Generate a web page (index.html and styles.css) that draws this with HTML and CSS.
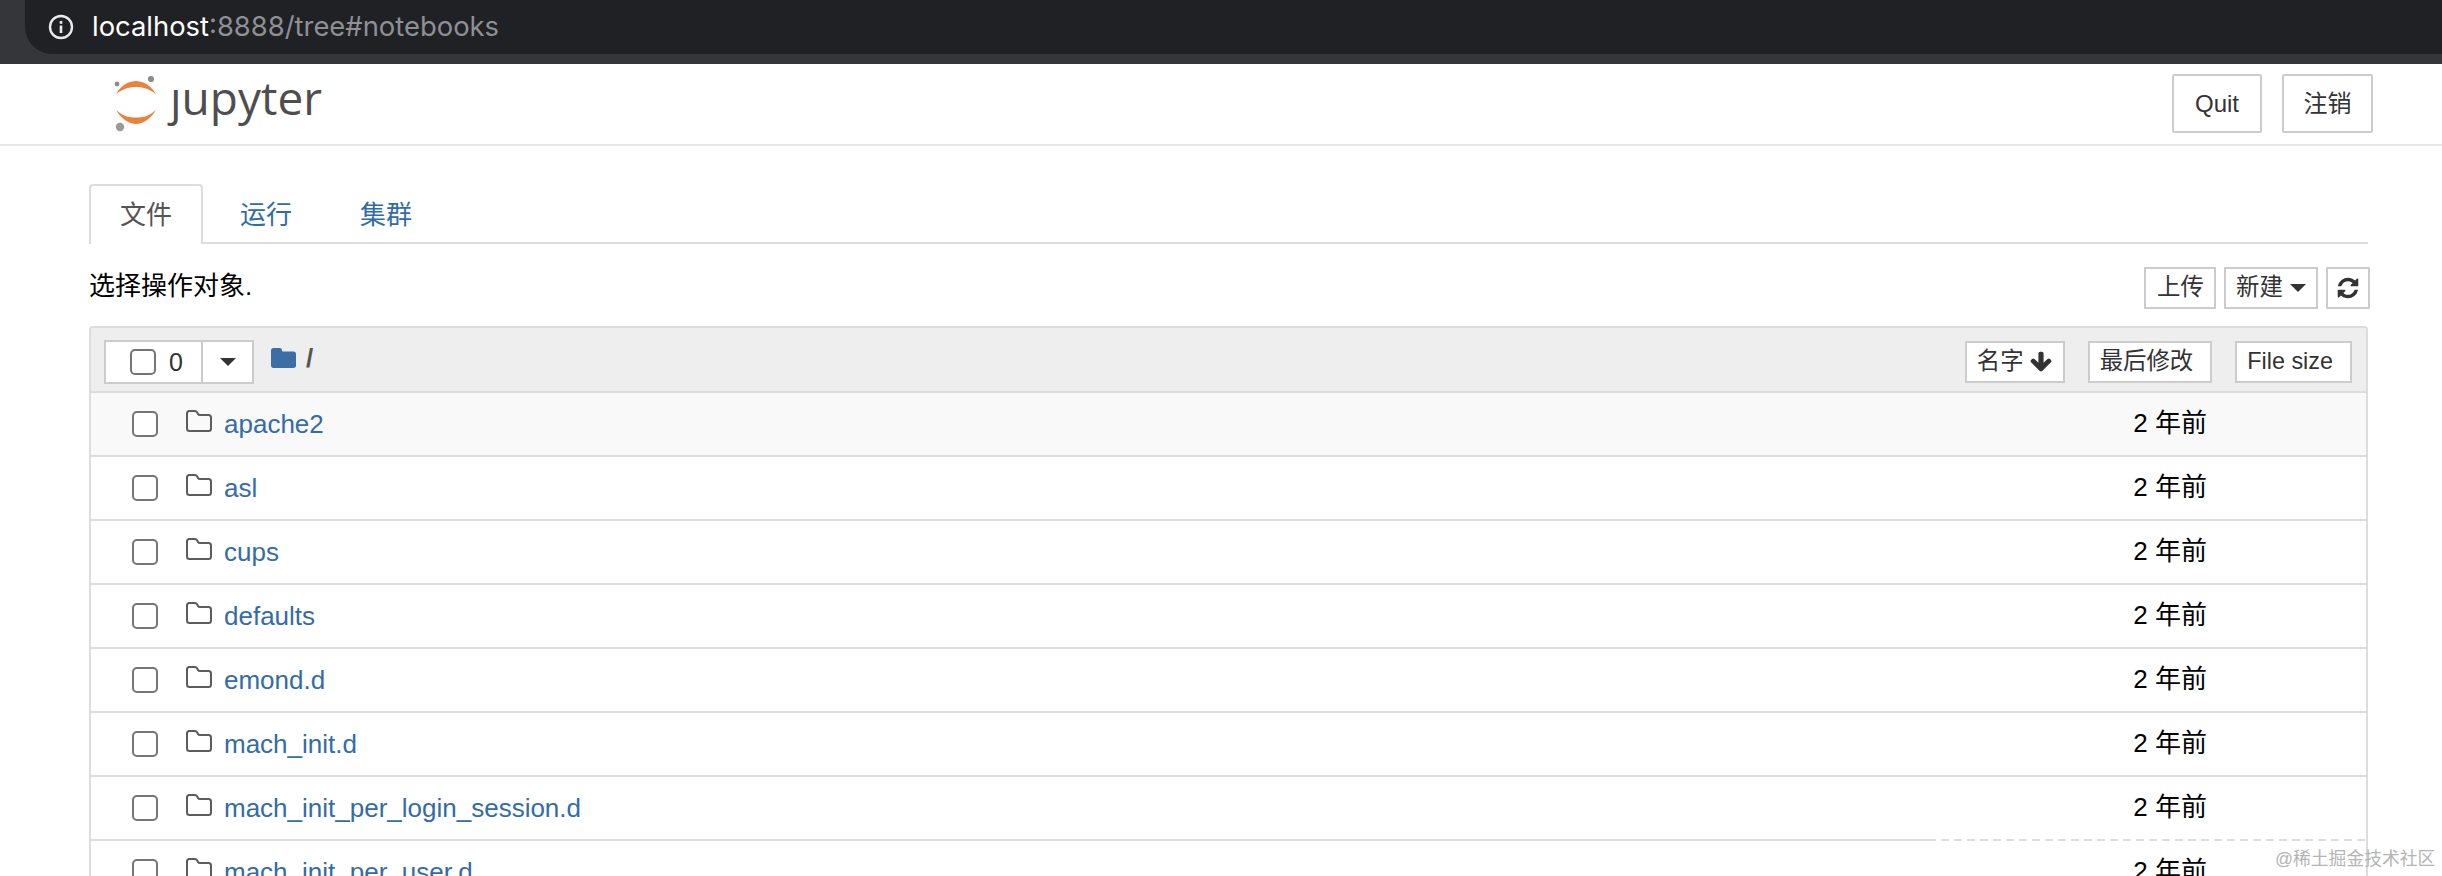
FILE: index.html
```html
<!DOCTYPE html>
<html lang="zh">
<head>
<meta charset="utf-8">
<title>Jupyter</title>
<link rel="stylesheet" href="styles.css">
</head>
<body>
<div class="chrome">
  <div class="omnibox">
    <svg class="info" viewBox="0 0 26 26"><circle cx="13" cy="13" r="11" fill="none" stroke="#e8eaed" stroke-width="2.4"/><rect x="11.7" y="11.5" width="2.6" height="7.5" fill="#e8eaed"/><rect x="11.7" y="7" width="2.6" height="2.8" fill="#e8eaed"/></svg>
    <span class="host">localhost</span><span class="path">:8888/tree#notebooks</span>
  </div>
</div>
<header class="site-header">
  <div class="logo">
    <svg class="logo-mark" viewBox="0 0 50 60">
      <path d="M4 22C10 12 18 9 24 9S38 12 44 22C36 16 30 15 24 15S12 16 4 22Z" fill="#e9823c"/>
      <path d="M4 38C12 45 18 45.5 24 45.500S36 45 44 38C38 48 30 52 24 52S10 48 4 38Z" fill="#e9823c"/>
      <circle cx="5" cy="12" r="2.400" fill="#8c8c8c"/>
      <circle cx="39" cy="7" r="3.100" fill="#8c8c8c"/>
      <circle cx="8" cy="55" r="4.200" fill="#999"/>
    </svg>
    <span class="logo-text">ȷupyter</span>
  </div>
  <div class="header-actions">
    <button class="btn btn-lg">Quit</button>
    <button class="btn btn-lg btn-logout">注销</button>
  </div>
</header>
<main class="main">
  <ul class="tabs">
    <li class="tab active">文件</li>
    <li class="tab">运行</li>
    <li class="tab">集群</li>
  </ul>
  <div class="toolbar">
    <span class="hint">选择操作对象.</span>
    <div class="toolbar-actions">
      <button class="btn btn-upload">上传</button>
      <button class="btn btn-new">新建<i class="caret"></i></button>
      <button class="btn btn-refresh"><svg class="fa-refresh" viewBox="0 0 1792 1792"><path fill="#333" d="M1639 1056q0 5-1 7-64 268-268 434.5t-478 166.5q-146 0-282.5-55t-243.5-157l-129 129q-19 19-45 19t-45-19-19-45v-448q0-26 19-45t45-19h448q26 0 45 19t19 45-19 45l-137 137q71 66 161 102t187 36q134 0 250-65t186-179q11-17 53-117 8-23 30-23h192q13 0 22.5 9.5t9.5 22.5zm25-800v448q0 26-19 45t-45 19h-448q-26 0-45-19t-19-45 19-45l138-138q-148-137-349-137-134 0-250 65t-186 179q-11 17-53 117-8 23-30 23h-199q-13 0-22.5-9.5t-9.5-22.5v-7q65-268 270-434.5t480-166.5q146 0 284 55.5t245 156.5l130-129q19-19 45-19t45 19 19 45z"/></svg></button>
    </div>
  </div>
  <section class="panel">
    <div class="panel-head">
      <div class="select-group">
        <label class="select-count"><input class="check" type="checkbox"><span>0</span></label>
        <span class="select-drop"><i class="caret"></i></span>
      </div>
      <div class="crumb">
        <svg class="crumb-folder" viewBox="0 0 25 20"><path fill="#3a6ea5" d="M2.500 0H8.500C10 0 10.800 .8 11 2.500C11.100 3.200 11.500 3.500 12.500 3.500H22.500C24 3.500 25 4.500 25 6V17.500C25 19 24 20 22.500 20H2.500C1 20 0 19 0 17.500V2.500C0 1 1 0 2.500 0Z"/></svg>
        <span class="crumb-slash">/</span>
      </div>
      <div class="sorters">
        <button class="btn btn-sort">名字<svg class="fa-arrow" viewBox="0 0 1792 1792"><path fill="#333" d="M1675 832q0 53-37 90l-651 652q-39 37-91 37-53 0-90-37l-651-652q-38-36-38-90 0-53 38-91l74-75q39-37 91-37 53 0 90 37l294 294v-704q0-52 38-90t90-38h128q52 0 90 38t38 90v704l294-294q37-37 90-37 52 0 91 37l75 75q37 39 37 91z"/></svg></button>
        <button class="btn btn-sort btn-wide">最后修改</button>
        <button class="btn btn-sort btn-wide">File size</button>
      </div>
    </div>
    <div class="row row-odd"><input class="check" type="checkbox"><svg class="folder" viewBox="0 0 26 22"><path d="M3.500 1H9C10 1 10.600 1.500 11.200 2.500L12 4C12.400 4.800 13 5 14 5H22.500C24 5 25 6 25 7.500V18.500C25 20 24 21 22.500 21H3.500C2 21 1 20 1 18.500V3.500C1 2 2 1 3.500 1Z"/></svg><a class="name">apache2</a><span class="date">2 年前</span></div>
    <div class="row"><input class="check" type="checkbox"><svg class="folder" viewBox="0 0 26 22"><path d="M3.500 1H9C10 1 10.600 1.500 11.200 2.500L12 4C12.400 4.800 13 5 14 5H22.500C24 5 25 6 25 7.500V18.500C25 20 24 21 22.500 21H3.500C2 21 1 20 1 18.500V3.500C1 2 2 1 3.500 1Z"/></svg><a class="name">asl</a><span class="date">2 年前</span></div>
    <div class="row"><input class="check" type="checkbox"><svg class="folder" viewBox="0 0 26 22"><path d="M3.500 1H9C10 1 10.600 1.500 11.200 2.500L12 4C12.400 4.800 13 5 14 5H22.500C24 5 25 6 25 7.500V18.500C25 20 24 21 22.500 21H3.500C2 21 1 20 1 18.500V3.500C1 2 2 1 3.500 1Z"/></svg><a class="name">cups</a><span class="date">2 年前</span></div>
    <div class="row"><input class="check" type="checkbox"><svg class="folder" viewBox="0 0 26 22"><path d="M3.500 1H9C10 1 10.600 1.500 11.200 2.500L12 4C12.400 4.800 13 5 14 5H22.500C24 5 25 6 25 7.500V18.500C25 20 24 21 22.500 21H3.500C2 21 1 20 1 18.500V3.500C1 2 2 1 3.500 1Z"/></svg><a class="name">defaults</a><span class="date">2 年前</span></div>
    <div class="row"><input class="check" type="checkbox"><svg class="folder" viewBox="0 0 26 22"><path d="M3.500 1H9C10 1 10.600 1.500 11.200 2.500L12 4C12.400 4.800 13 5 14 5H22.500C24 5 25 6 25 7.500V18.500C25 20 24 21 22.500 21H3.500C2 21 1 20 1 18.500V3.500C1 2 2 1 3.500 1Z"/></svg><a class="name">emond.d</a><span class="date">2 年前</span></div>
    <div class="row"><input class="check" type="checkbox"><svg class="folder" viewBox="0 0 26 22"><path d="M3.500 1H9C10 1 10.600 1.500 11.200 2.500L12 4C12.400 4.800 13 5 14 5H22.500C24 5 25 6 25 7.500V18.500C25 20 24 21 22.500 21H3.500C2 21 1 20 1 18.500V3.500C1 2 2 1 3.500 1Z"/></svg><a class="name">mach_init.d</a><span class="date">2 年前</span></div>
    <div class="row row-dashed"><input class="check" type="checkbox"><svg class="folder" viewBox="0 0 26 22"><path d="M3.500 1H9C10 1 10.600 1.500 11.200 2.500L12 4C12.400 4.800 13 5 14 5H22.500C24 5 25 6 25 7.500V18.500C25 20 24 21 22.500 21H3.500C2 21 1 20 1 18.500V3.500C1 2 2 1 3.500 1Z"/></svg><a class="name">mach_init_per_login_session.d</a><span class="date">2 年前</span></div>
    <div class="row"><input class="check" type="checkbox"><svg class="folder" viewBox="0 0 26 22"><path d="M3.500 1H9C10 1 10.600 1.500 11.200 2.500L12 4C12.400 4.800 13 5 14 5H22.500C24 5 25 6 25 7.500V18.500C25 20 24 21 22.500 21H3.500C2 21 1 20 1 18.500V3.500C1 2 2 1 3.500 1Z"/></svg><a class="name">mach_init_per_user.d</a><span class="date">2 年前</span></div>
  </section>
</main>
<div class="watermark">@稀土掘金技术社区</div>
</body>
</html>
```
FILE: styles.css
```css
* { box-sizing: border-box; }
html, body { margin: 0; height: 876px; overflow: hidden; background: #fff; }
body {
  font-family: "Liberation Sans", "Noto Sans CJK SC", sans-serif;
  font-size: 26px;
  color: #000;
  position: relative;
}
.chrome { height: 64px; background: #35363a; padding-left: 25px; }
.omnibox {
  height: 54px;
  background: #202124;
  border-radius: 0 0 0 27px;
  display: flex;
  align-items: center;
  padding-left: 23px;
  font-family: "Inter", "Liberation Sans", sans-serif;
  font-size: 27.400px;
  padding-bottom: 2px;
}
.info { width: 26px; height: 26px; margin-right: 18px; margin-top: 2px; }
.host { color: #fff; }
.path { color: #8e9094; }
.site-header {
  height: 82px;
  border-bottom: 2px solid #e7e7e7;
  display: flex;
  align-items: flex-start;
  justify-content: space-between;
  padding: 10px 69px 0 112px;
}
.logo { display: flex; align-items: flex-start; }
.logo-mark { width: 50px; height: 60px; display: block; margin-top: -2px; }
.logo-text {
  font-family: "Open Sans", sans-serif;
  font-size: 46px;
  line-height: 60px;
  color: #4e4e4e;
  margin-left: 8px;
  margin-top: -7px;
}
.header-actions { display: flex; gap: 20px; }
.btn {
  font-family: inherit;
  background: #fff;
  border: 2px solid #ccc;
  color: #333;
  font-size: 23.4px;
  height: 42px;
  padding: 0 11px;
  display: inline-flex;
  align-items: center;
  line-height: 1;
  white-space: nowrap;
}
.btn-lg { height: 59px; width: 90px; justify-content: center; font-size: 24px; border-radius: 2px; }
.btn-logout { width: 91px; }
.main { padding: 38px 74px 0 89px; }
.tabs {
  list-style: none;
  margin: 0;
  padding: 0;
  display: flex;
  gap: 6px;
  border-bottom: 2px solid #ddd;
  height: 60px;
}
.tab {
  height: 60px;
  padding: 0 29px;
  border: 2px solid transparent;
  border-bottom: 0;
  color: #2f6ca8;
  line-height: 58px;
  font-size: 26px;
}
.tab.active {
  color: #555;
  background: #fff;
  border-color: #ddd;
  border-radius: 4px 4px 0 0;
}
.toolbar {
  height: 42px;
  margin: 23px -2px 17px 0;
  display: flex;
  align-items: center;
  justify-content: space-between;
}
.hint { position: relative; top: -5px; }
.toolbar-actions { display: flex; gap: 8px; }
.btn-upload { width: 72px; padding: 0 0 0 11px; }
.btn-new { width: 94px; padding: 0 0 0 10px; }
.btn-refresh { width: 44px; padding: 0; justify-content: center; }
.caret {
  display: inline-block;
  width: 0;
  height: 0;
  border-left: 8px solid transparent;
  border-right: 8px solid transparent;
  border-top: 8px solid #333;
}
.btn-new .caret { margin-left: 7px; }
.fa-refresh { width: 24px; height: 24px; flex: none; }
.panel { border: 2px solid #ddd; border-radius: 4px 4px 0 0; border-bottom: 0; }
.panel-head {
  height: 65px;
  background: #eee;
  border-bottom: 2px solid #ddd;
  padding: 12px 14px 0 13px;
  display: flex;
  align-items: flex-start;
}
.select-group {
  width: 150px;
  height: 44px;
  background: #fff;
  border: 2px solid #ccc;
  display: flex;
}
.select-count {
  width: 97px;
  border-right: 2px solid #ccc;
  display: flex;
  align-items: center;
  padding-left: 24px;
  font-size: 25px;
  color: #333;
  gap: 13px;
}
.select-drop { flex: 1; display: flex; align-items: center; justify-content: center; }
.check {
  appearance: none;
  -webkit-appearance: none;
  width: 26px;
  height: 26px;
  margin: 0;
  border: 2px solid #757575;
  border-radius: 5px;
  background: #fff;
  flex: none;
}
.crumb { display: flex; align-items: center; margin-left: 17px; height: 36px; }
.crumb-folder { width: 25px; height: 20px; }
.crumb-slash { margin-left: 10px; color: #555; font-weight: bold; }
.sorters { margin-left: auto; margin-top: 1px; display: flex; gap: 23px; }
.btn-sort { padding: 0 10px; }
.btn-wide { padding-right: 17px; }
.fa-arrow { width: 24px; height: 24px; margin-left: 5px; }
.row {
  height: 64px;
  border-bottom: 2px solid #ddd;
  display: flex;
  align-items: center;
  padding-left: 41px;
  padding-right: 159px;
}
.row-odd { background: #f9f9f9; }
.row-dashed { position: relative; }
.row-dashed::after {
  content: "";
  position: absolute;
  left: 1845px;
  right: 0;
  bottom: -2px;
  height: 2px;
  background: repeating-linear-gradient(90deg, #fff 0 5px, transparent 5px 13px);
}
.folder {
  width: 26px;
  height: 22px;
  margin: -7px 12px 0 28px;
  fill: none;
  stroke: #5c5c5c;
  stroke-width: 2;
  flex: none;
}
.name { color: #336ca6; }
.date { margin-left: auto; position: relative; top: -4px; }
.watermark {
  position: absolute;
  left: 2275px;
  top: 847px;
  font-size: 17.800px;
  line-height: 24px;
  color: #b4b4b4;
  white-space: nowrap;
}
```
